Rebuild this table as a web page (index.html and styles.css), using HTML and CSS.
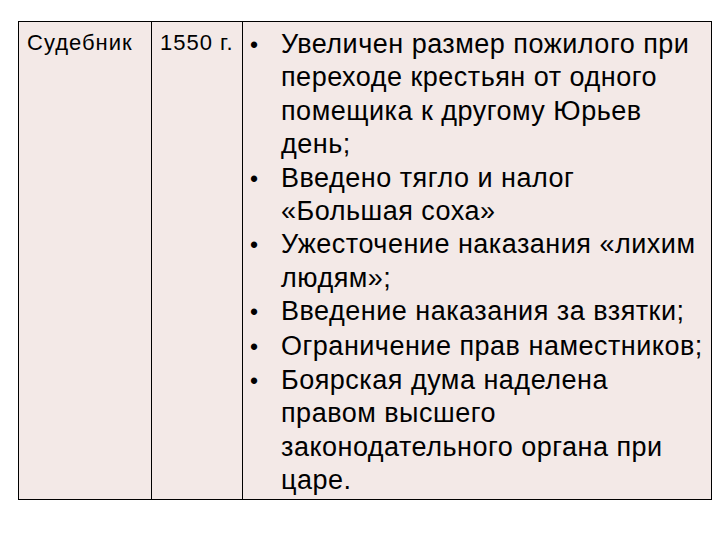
FILE: index.html
```html
<!DOCTYPE html>
<html lang="ru">
<head>
<meta charset="utf-8">
<link rel="stylesheet" href="styles.css">
</head>
<body>
<table class="law">
  <tr>
    <td class="c-name">Судебник</td>
    <td class="c-year">1550 г.</td>
    <td class="c-list">
      <ul class="items">
        <li>Увеличен размер пожилого при переходе крестьян от одного помещика к другому Юрьев день;</li>
        <li>Введено тягло и налог «Большая соха»</li>
        <li>Ужесточение наказания «лихим людям»;</li>
        <li>Введение наказания за взятки;</li>
        <li>Ограничение прав наместников;</li>
        <li>Боярская дума наделена правом высшего законодательного органа при царе.</li>
      </ul>
    </td>
  </tr>
</table>
</body>
</html>
```
FILE: styles.css
```css
html, body {
  margin: 0;
  padding: 0;
  background: #ffffff;
}
body {
  font-family: "Liberation Sans", Arial, sans-serif;
  color: #000;
  padding: 21px 0 0 18px;
}
.law {
  border-collapse: collapse;
  width: 694px;
  height: 479px;
  background: #f3e9e7;
}
.law td {
  border: 1px solid #000;
  vertical-align: top;
  padding: 0;
}
.c-name {
  width: 133px;
  font-size: 22px;
  letter-spacing: 1px;
  padding: 8px 0 0 8px !important;
  box-sizing: border-box;
}
.c-year {
  width: 91px;
  font-size: 22px;
  letter-spacing: 1px;
  padding: 8px 0 0 8px !important;
  box-sizing: border-box;
}
.c-list {
  font-size: 27px;
  letter-spacing: 0.5px;
  line-height: 33.4px;
  padding: 6px 2px 0 7px !important;
}
.items {
  list-style: none;
  margin: 0;
  padding: 0;
}
.items li {
  display: flex;
  align-items: baseline;
}
.items li::before {
  content: "•";
  font-size: 23px;
  flex: 0 0 31px;
}
```
